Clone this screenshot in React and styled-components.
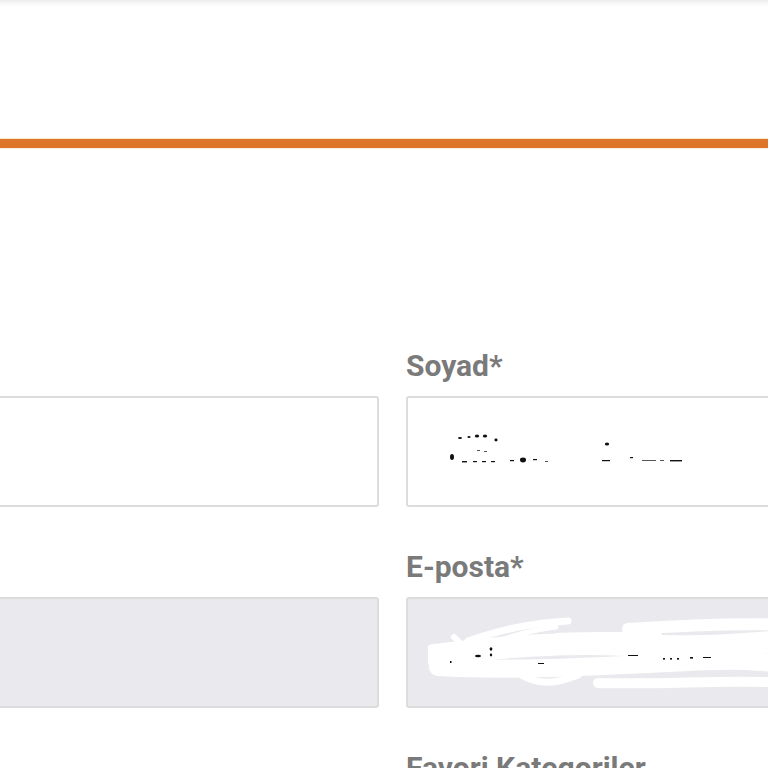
import React from 'react';
import styled, { createGlobalStyle } from 'styled-components';

const GlobalStyle = createGlobalStyle`
  html, body {
    margin: 0;
    padding: 0;
    background: #ffffff;
    overflow: hidden;
  }
  body {
    font-family: Roboto, "Noto Sans", "Liberation Sans", sans-serif;
  }
`;

const Page = styled.div`
  width: 768px;
  height: 768px;
  overflow: hidden;
  background: #ffffff;
`;

const Header = styled.header`
  height: 139px;
  background: linear-gradient(to bottom, #ececec 0px, #f7f7f7 3px, #ffffff 7px);
`;

const AccentBar = styled.div`
  height: 9px;
  background: #de7629;
  box-shadow: 0 -1px 0 #fbe7cf, 0 1px 0 #fbeedd;
`;

// the page is a zoomed crop: left column begins far off to the left
const Form = styled.form`
  display: grid;
  grid-template-columns: 800px 800px;
  column-gap: 27px;
  margin-left: -421px;
  padding-top: 200px;
`;

const Field = styled.div`
  display: flex;
  flex-direction: column;
  margin-bottom: 42px;
`;

const Label = styled.label`
  font-size: 30px;
  line-height: 36px;
  font-weight: 700;
  color: #7a7a7a;
  margin-bottom: 12px;
  height: 36px;
  white-space: nowrap;
`;

const InputBox = styled.div`
  height: 107px;
  border: 2px solid #dcdcdc;
  border-radius: 3px;
  background: ${p => (p.$disabled ? '#eaeaee' : '#ffffff')};
  display: flex;
  align-items: center;
  padding-left: 36px;
  overflow: hidden;
`;

const NameScribble = () => (
  <svg width="240" height="40" viewBox="0 0 240 40">
    <g fill="#111">
      <ellipse cx="16" cy="6" rx="2" ry="1" />
      <ellipse cx="25" cy="5" rx="1.6" ry="1" />
      <ellipse cx="33" cy="4" rx="2.2" ry="1.6" />
      <ellipse cx="41" cy="4" rx="2.2" ry="1.6" />
      <ellipse cx="52" cy="8" rx="1.6" ry="1.4" />
      <ellipse cx="8" cy="25" rx="2" ry="3" />
      <rect x="18" y="29" width="5" height="1.4" />
      <rect x="29" y="29" width="4" height="1.2" />
      <rect x="38" y="29" width="4" height="1.2" />
      <rect x="47" y="29" width="4" height="1.2" />
      <rect x="66" y="28" width="4" height="1.2" />
      <ellipse cx="79" cy="28" rx="3" ry="2.4" />
      <rect x="89" y="27" width="4" height="1.2" />
      <ellipse cx="163" cy="12" rx="2.2" ry="1.6" />
      <rect x="158" y="28" width="8" height="1.2" />
      <rect x="186" y="25" width="3" height="1.2" />
      <rect x="226" y="28" width="12" height="1.4" />
    </g>
    <g fill="#555">
      <rect x="33" y="18" width="3" height="1" />
      <rect x="40" y="19" width="3" height="1" />
      <rect x="101" y="29" width="3" height="1" />
      <rect x="198" y="28" width="14" height="1" />
      <rect x="216" y="28" width="4" height="1" />
    </g>
  </svg>
);

const MailScribble = () => (
  <svg width="360" height="84" viewBox="0 0 360 84" style={{ marginLeft: -16 }}>
    <g fill="none" stroke="#ffffff" strokeLinecap="round" strokeLinejoin="round">
      <path d="M6 44 C60 38 120 30 200 34 S320 32 360 30" strokeWidth="22" />
      <path d="M10 56 C80 60 160 56 240 52 S330 50 360 54" strokeWidth="18" />
      <path d="M40 30 C70 20 100 12 140 10" strokeWidth="7" />
      <path d="M60 34 C90 22 110 18 128 16" strokeWidth="5" />
      <path d="M90 62 C110 76 130 72 150 64" strokeWidth="7" />
      <path d="M200 18 C260 14 320 12 360 14" strokeWidth="12" />
      <path d="M170 72 C240 74 300 68 360 72" strokeWidth="10" />
      <path d="M26 26 C40 40 50 52 72 62" strokeWidth="6" />
      <path d="M130 26 C160 24 190 26 230 24" strokeWidth="8" />
    </g>
    <g fill="#111">
      <ellipse cx="50" cy="45" rx="3" ry="1.2" />
      <ellipse cx="63" cy="38" rx="1.4" ry="1.8" />
      <ellipse cx="63" cy="44" rx="1.2" ry="1.4" />
      <rect x="22" y="50" width="1.5" height="2" />
      <rect x="110" y="52" width="6" height="1" />
      <rect x="200" y="44" width="10" height="1" />
      <rect x="235" y="47" width="2" height="1.6" />
      <rect x="242" y="47" width="2" height="1.6" />
      <rect x="249" y="47" width="2" height="1.6" />
      <rect x="262" y="46" width="3" height="1.6" />
      <rect x="275" y="46" width="8" height="1" />
    </g>
  </svg>
);

const fields = [
  { label: 'Ad*', disabled: false },
  { label: 'Soyad*', disabled: false, content: <NameScribble /> },
  { label: 'Kullanıcı Adı*', disabled: true },
  { label: 'E-posta*', disabled: true, content: <MailScribble /> },
  { label: 'Telefon', disabled: false },
  { label: 'Favori Kategoriler', disabled: false },
];

export default function App() {
  return (
    <Page>
      <GlobalStyle />
      <Header />
      <AccentBar />
      <Form>
        {fields.map(f => (
          <Field key={f.label}>
            <Label>{f.label}</Label>
            <InputBox $disabled={f.disabled}>{f.content}</InputBox>
          </Field>
        ))}
      </Form>
    </Page>
  );
}
